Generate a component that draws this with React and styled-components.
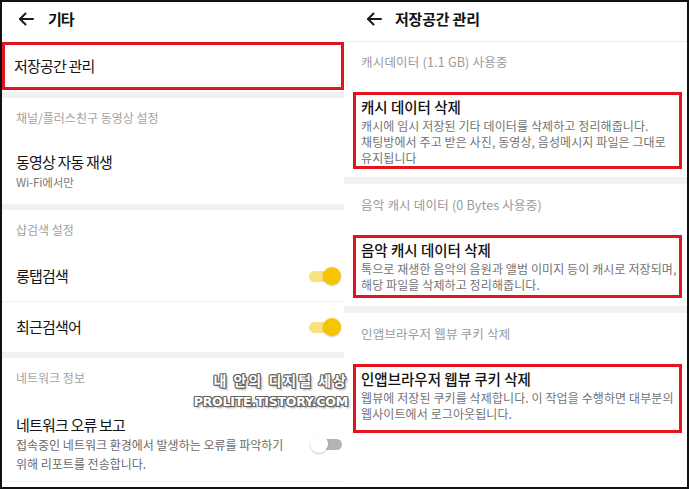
import React from "react";
import styled, { createGlobalStyle } from "styled-components";

const GlobalStyle = createGlobalStyle`
  html, body {
    margin: 0;
    padding: 0;
    background: #fff;
  }
  body {
    font-family: "Noto Sans CJK KR", "Noto Sans", sans-serif;
  }
`;

const BackIcon = () => (
  <svg width="16" height="14" viewBox="0 0 16 14" fill="none">
    <path d="M15 7H2" stroke="#1a1a1a" strokeWidth="2" strokeLinecap="round" />
    <path
      d="M7.5 1.5L2 7l5.5 5.5"
      stroke="#1a1a1a"
      strokeWidth="2"
      strokeLinecap="round"
      strokeLinejoin="round"
    />
  </svg>
);

const Toggle = ({ on }) => (
  <Switch>
    <Track $on={on} />
    <Knob $on={on} />
  </Switch>
);

const App = () => {
  return (
    <>
      <GlobalStyle />
      <Frame>
        {/* left screen: 기타 */}
        <Panel $width="342px">
          <Header $indent="16px" $gap="14px">
            <BackIcon />
            <HeaderTitle $ls="-1px">기타</HeaderTitle>
          </Header>
          <MarkedRow>
            <RowTitle>저장공간 관리</RowTitle>
          </MarkedRow>
          <Band $top="2px" />
          <SectionLabel>채널/플러스친구 동영상 설정</SectionLabel>
          <Row>
            <RowText>
              <RowTitle>동영상 자동 재생</RowTitle>
              <SubText>Wi-Fi에서만</SubText>
            </RowText>
          </Row>
          <Band />
          <SectionLabel>샵검색 설정</SectionLabel>
          <ToggleRow>
            <RowTitle>롱탭검색</RowTitle>
            <Toggle on />
          </ToggleRow>
          <Divider />
          <ToggleRow>
            <RowTitle>최근검색어</RowTitle>
            <Toggle on />
          </ToggleRow>
          <Band />
          <SectionLabel>네트워크 정보</SectionLabel>
          <ToggleRow $tall>
            <RowText>
              <RowTitle>네트워크 오류 보고</RowTitle>
              <Desc>
                접속중인 네트워크 환경에서 발생하는 오류를 파악하기
                <br />
                위해 리포트를 전송합니다.
              </Desc>
            </RowText>
            <Toggle on={false} />
          </ToggleRow>
          <Divider />
        </Panel>

        {/* right screen: 저장공간 관리 */}
        <Panel $width="343px">
          <Header $indent="22px" $gap="13px" $line>
            <BackIcon />
            <HeaderTitle $ls="-0.2px">저장공간 관리</HeaderTitle>
          </Header>
          <StoreLabel>캐시데이터 (1.1 GB) 사용중</StoreLabel>
          <ActionBox $pb="0px">
            <BoxTitle>캐시 데이터 삭제</BoxTitle>
            <BoxDesc>
              캐시에 임시 저장된 기타 데이터를 삭제하고 정리해줍니다.
              <br />
              채팅방에서 주고 받은 사진, 동영상, 음성메시지 파일은 그대로
              <br />
              유지됩니다
            </BoxDesc>
          </ActionBox>
          <Band $h="7px" />
          <StoreLabel $top="13px">음악 캐시 데이터 (0 Bytes 사용중)</StoreLabel>
          <ActionBox $pb="2px">
            <BoxTitle>음악 캐시 데이터 삭제</BoxTitle>
            <BoxDesc>
              톡으로 재생한 음악의 음원과 앨범 이미지 등이 캐시로 저장되며,
              <br />
              해당 파일을 삭제하고 정리해줍니다.
            </BoxDesc>
          </ActionBox>
          <Band $h="7px" />
          <StoreLabel $top="13px">인앱브라우저 웹뷰 쿠키 삭제</StoreLabel>
          <ActionBox $pb="8px">
            <BoxTitle>인앱브라우저 웹뷰 쿠키 삭제</BoxTitle>
            <BoxDesc>
              웹뷰에 저장된 쿠키를 삭제합니다. 이 작업을 수행하면 대부분의
              <br />
              웹사이트에서 로그아웃됩니다.
            </BoxDesc>
          </ActionBox>
        </Panel>

        <Watermark>
          <MarkLine>내 안의 디지털 세상</MarkLine>
          <MarkUrl>PROLITE.TISTORY.COM</MarkUrl>
        </Watermark>
      </Frame>
    </>
  );
};

export default App;

const Frame = styled.div`
  position: relative;
  width: 689px;
  height: 489px;
  box-sizing: border-box;
  border: 2px solid #111;
  display: flex;
  overflow: hidden;
  background: #fff;
  color: #141414;
`;

const Panel = styled.div`
  width: ${(p) => p.$width};
  flex-shrink: 0;
  display: flex;
  flex-direction: column;
`;

const Header = styled.div`
  height: ${(p) => (p.$line ? "40px" : "38px")};
  box-sizing: border-box;
  display: flex;
  align-items: center;
  gap: ${(p) => p.$gap};
  padding: 0 0 ${(p) => (p.$line ? "5px" : "4px")} ${(p) => p.$indent};
  border-bottom: ${(p) => (p.$line ? "1px solid #ececec" : "none")};
  flex-shrink: 0;
`;

const HeaderTitle = styled.span`
  font-size: 15px;
  font-weight: 700;
  letter-spacing: ${(p) => p.$ls};
  line-height: 20px;
  color: #111;
`;

const MarkedRow = styled.div`
  margin-top: 2px;
  height: 48px;
  box-sizing: border-box;
  border: 3px solid #e3141d;
  padding-left: 9px;
  display: flex;
  align-items: center;
`;

const Band = styled.div`
  margin-top: ${(p) => p.$top || "0"};
  height: ${(p) => p.$h || "6px"};
  background: #f2f2f2;
  flex-shrink: 0;
`;

const Divider = styled.div`
  height: 1px;
  background: #efefef;
  flex-shrink: 0;
`;

const SectionLabel = styled.div`
  padding: 12px 14px 13px;
  font-size: 12px;
  line-height: 16px;
  letter-spacing: 0;
  color: #a2a2a2;
`;

const Row = styled.div`
  padding: 13px 14px;
  display: flex;
  align-items: center;
`;

const RowText = styled.div`
  display: flex;
  flex-direction: column;
`;

const RowTitle = styled.span`
  font-size: 15px;
  line-height: 20px;
  letter-spacing: -0.8px;
  color: #141414;
`;

const SubText = styled.span`
  margin-top: 1px;
  font-size: 11.5px;
  line-height: 18px;
  letter-spacing: -0.1px;
  color: #7a7a7a;
`;

const ToggleRow = styled.div`
  box-sizing: border-box;
  height: ${(p) => (p.$tall ? "auto" : "50px")};
  padding: ${(p) => (p.$tall ? "16px 2px 8px 14px" : "0 3px 0 14px")};
  display: flex;
  align-items: center;
  justify-content: space-between;
`;

const Desc = styled.span`
  font-size: 12px;
  line-height: 19px;
  letter-spacing: 0;
  color: #6a6a6a;
  white-space: nowrap;
`;

const Switch = styled.span`
  position: relative;
  display: inline-block;
  width: 32px;
  height: 18px;
  flex-shrink: 0;
`;

const Track = styled.span`
  position: absolute;
  top: 3.5px;
  width: 25px;
  height: 11px;
  border-radius: 6px;
  ${(p) =>
    p.$on
      ? "left: 0; background: #f9e17f;"
      : "right: 0; background: #b4b4b4;"}
`;

const Knob = styled.span`
  position: absolute;
  top: 0;
  width: 18px;
  height: 18px;
  border-radius: 50%;
  box-shadow: 0 1px 2px rgba(0, 0, 0, 0.22);
  ${(p) =>
    p.$on ? "right: 0; background: #f6c400;" : "left: 0; background: #fff;"}
`;

const StoreLabel = styled.div`
  padding: ${(p) => p.$top || "12px"} 17px 14px;
  font-size: 12.5px;
  line-height: 16px;
  letter-spacing: 0.2px;
  color: #9a9a9a;
`;

const ActionBox = styled.div`
  margin: 8px 5px 8px 9px;
  border: 3px solid #e3141d;
  padding: 3px 5px ${(p) => p.$pb};
  display: flex;
  flex-direction: column;
  gap: 2px;
`;

const BoxTitle = styled.span`
  font-size: 14.5px;
  font-weight: 500;
  line-height: 18px;
  letter-spacing: 0;
  color: #111;
`;

const BoxDesc = styled.span`
  font-size: 12px;
  line-height: 16px;
  letter-spacing: 0.1px;
  color: #737373;
  white-space: nowrap;
`;

const Watermark = styled.div`
  position: absolute;
  left: 170px;
  top: 367px;
  width: 176px;
  display: flex;
  flex-direction: column;
  align-items: flex-end;
  pointer-events: none;
`;

const outline = `
  -1px -1px 0 #666, 1px -1px 0 #666, -1px 1px 0 #666,
  1px 1px 0 #666, 0 -1px 0 #666, 0 1px 0 #666,
  -1px 0 0 #666, 1px 0 0 #666, 2px 2px 2px rgba(0, 0, 0, 0.4)
`;

const MarkLine = styled.span`
  font-family: "Noto Sans CJK KR", sans-serif;
  font-size: 14px;
  font-weight: 700;
  line-height: 22px;
  letter-spacing: 2px;
  color: #fff;
  text-shadow: ${outline};
`;

const MarkUrl = styled.span`
  font-family: "DejaVu Sans", sans-serif;
  font-size: 12.5px;
  font-weight: 700;
  line-height: 22px;
  letter-spacing: -0.2px;
  color: #fff;
  text-shadow: ${outline};
`;
